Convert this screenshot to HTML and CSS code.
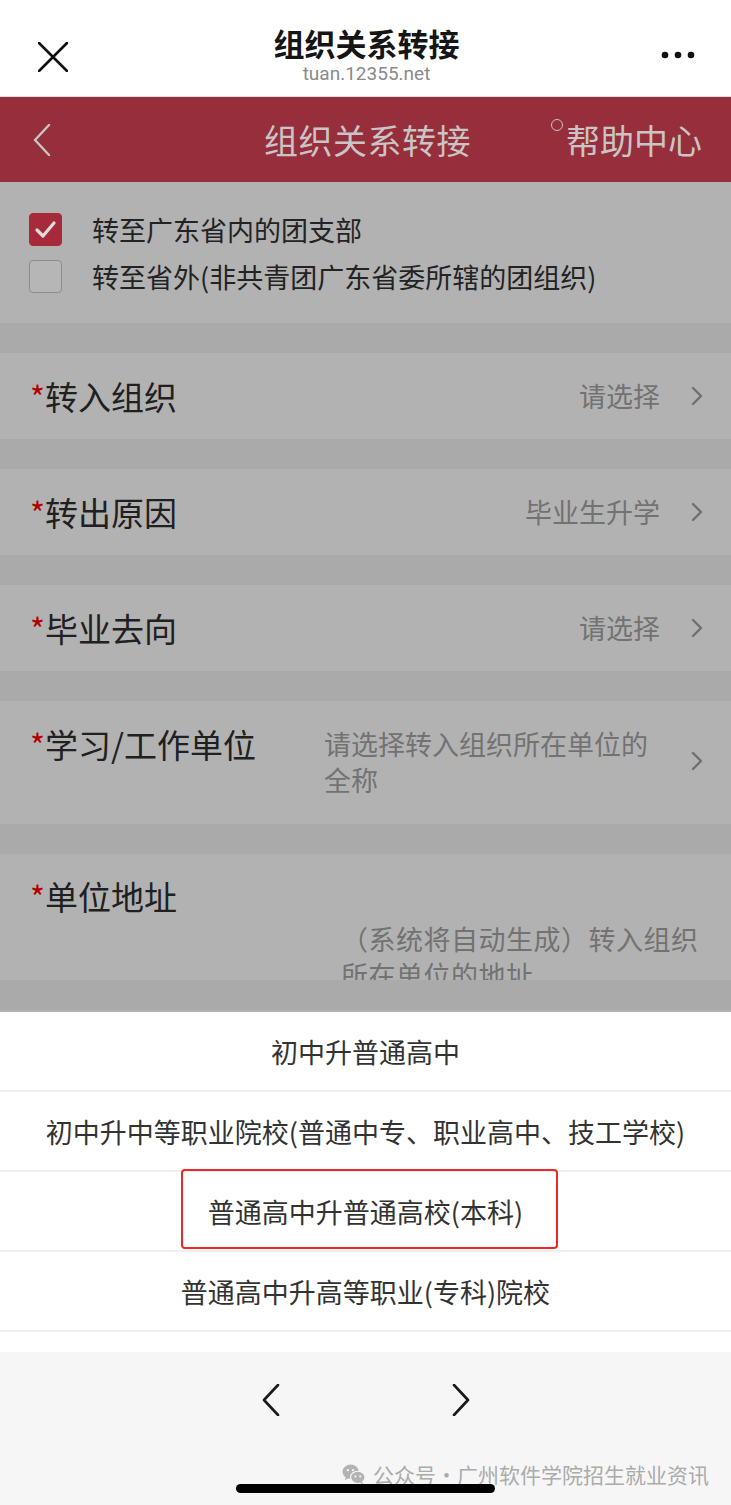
FILE: index.html
```html
<!DOCTYPE html>
<html lang="zh-CN">
<head>
<meta charset="utf-8">
<title>组织关系转接</title>
<link rel="stylesheet" href="styles.css">
</head>
<body>
<div class="screen">
  <header class="topbar">
    <svg class="close" width="30" height="30" viewBox="0 0 30 30"><path d="M1 1 L29 29 M29 1 L1 29" stroke="#111" stroke-width="2.6" stroke-linecap="round" fill="none"/></svg>
    <div class="titles">
      <div class="title">组织关系转接</div>
      <div class="url">tuan.12355.net</div>
    </div>
    <svg class="more" width="34" height="8" viewBox="0 0 34 8"><circle cx="4" cy="4" r="3.3" fill="#111"/><circle cx="17" cy="4" r="3.3" fill="#111"/><circle cx="30" cy="4" r="3.3" fill="#111"/></svg>
  </header>

  <nav class="navbar">
    <svg class="back" width="18" height="32" viewBox="0 0 18 32"><path d="M16 1 L2 16 L16 31" stroke="#c9c4c5" stroke-width="2.4" fill="none" stroke-linecap="round" stroke-linejoin="round"/></svg>
    <div class="nav-title">组织关系转接</div>
    <div class="help"><span class="ring"></span>帮助中心</div>
  </nav>

  <main class="form">
    <section class="choices">
      <div class="choice">
        <span class="box checked"><svg width="31" height="31" viewBox="0 0 31 31"><path d="M7 16 L13 22 L24 9" stroke="#dcdcdc" stroke-width="3.2" fill="none" stroke-linecap="round" stroke-linejoin="round"/></svg></span>
        <span>转至广东省内的团支部</span>
      </div>
      <div class="choice">
        <span class="box"></span>
        <span>转至省外(非共青团广东省委所辖的团组织)</span>
      </div>
    </section>

    <div class="row">
      <div class="label"><span class="star">*</span>转入组织</div>
      <div class="value">请选择</div>
      <svg class="chev" width="12" height="20" viewBox="0 0 12 20"><path d="M2 2 L10 10 L2 18" stroke="#6f6f6f" stroke-width="2.4" fill="none" stroke-linecap="round" stroke-linejoin="round"/></svg>
    </div>

    <div class="row">
      <div class="label"><span class="star">*</span>转出原因</div>
      <div class="value">毕业生升学</div>
      <svg class="chev" width="12" height="20" viewBox="0 0 12 20"><path d="M2 2 L10 10 L2 18" stroke="#6f6f6f" stroke-width="2.4" fill="none" stroke-linecap="round" stroke-linejoin="round"/></svg>
    </div>

    <div class="row">
      <div class="label"><span class="star">*</span>毕业去向</div>
      <div class="value">请选择</div>
      <svg class="chev" width="12" height="20" viewBox="0 0 12 20"><path d="M2 2 L10 10 L2 18" stroke="#6f6f6f" stroke-width="2.4" fill="none" stroke-linecap="round" stroke-linejoin="round"/></svg>
    </div>

    <div class="row tall">
      <div class="label"><span class="star">*</span>学习/工作单位</div>
      <div class="value wrap">请选择转入组织所在单位的全称</div>
      <svg class="chev mid" width="12" height="20" viewBox="0 0 12 20"><path d="M2 2 L10 10 L2 18" stroke="#6f6f6f" stroke-width="2.4" fill="none" stroke-linecap="round" stroke-linejoin="round"/></svg>
    </div>

    <div class="row addr">
      <div class="label"><span class="star">*</span>单位地址</div>
      <div class="value block">（系统将自动生成）转入组织所在单位的地址</div>
    </div>

    <div class="row last">
      <div class="label"><span class="star">*</span>附件上传</div>
    </div>
  </main>

  <div class="sheet">
    <div class="option">初中升普通高中</div>
    <div class="option">初中升中等职业院校(普通中专、职业高中、技工学校)</div>
    <div class="option">普通高中升普通高校(本科)</div>
    <div class="option">普通高中升高等职业(专科)院校</div>
    <div class="spacer"></div>
    <div class="footer">
      <svg width="18" height="32" viewBox="0 0 18 32"><path d="M16 1 L2 16 L16 31" stroke="#1a1a1a" stroke-width="2.6" fill="none" stroke-linecap="round" stroke-linejoin="round"/></svg>
      <svg width="18" height="32" viewBox="0 0 18 32"><path d="M2 1 L16 16 L2 31" stroke="#1a1a1a" stroke-width="2.6" fill="none" stroke-linecap="round" stroke-linejoin="round"/></svg>
    </div>
  </div>

  <div class="highlight"></div>

  <div class="watermark">
    <svg width="24" height="21" viewBox="0 0 25 22">
      <ellipse cx="9" cy="8" rx="8.6" ry="7.4" fill="#b3b3b3"/>
      <path d="M4 13 L3 17 L7.5 14.5 Z" fill="#b3b3b3"/>
      <circle cx="6" cy="6.5" r="1.2" fill="#f6f6f6"/>
      <circle cx="11.5" cy="6.5" r="1.2" fill="#f6f6f6"/>
      <ellipse cx="16.5" cy="14" rx="7.6" ry="6.4" fill="#b3b3b3" stroke="#f6f6f6" stroke-width="1.2"/>
      <path d="M21 18.5 L22.5 21.5 L18.5 19.5 Z" fill="#b3b3b3"/>
      <circle cx="14" cy="13" r="1.1" fill="#f6f6f6"/>
      <circle cx="19" cy="13" r="1.1" fill="#f6f6f6"/>
    </svg>
    <span>公众号<span class="dot">·</span>广州软件学院招生就业资讯</span>
  </div>

  <div class="home-bar"></div>
</div>
</body>
</html>
```

FILE: styles.css
```css
* { box-sizing: border-box; }

body {
  margin: 0;
  font-family: "Noto Sans CJK SC", "Noto Sans", sans-serif;
  background: #aaaaaa;
}

.screen {
  position: relative;
  width: 731px;
  height: 1505px;
  overflow: hidden;
  background: #aaaaaa;
}

/* top white bar */
.topbar {
  height: 97px;
  background: #fff;
  border-bottom: 1px solid #e4dcdd;
  display: grid;
  grid-template-columns: 1fr auto 1fr;
  align-items: start;
  padding: 25px 36px 0 38px;
}
.close { margin-top: 17px; }
.more { justify-self: end; margin-top: 26px; }
.titles { text-align: center; }
.title {
  font-size: 31px;
  line-height: 36px;
  font-weight: 700;
  color: #151515;
}
.url {
  font-family: Roboto, "Liberation Sans", sans-serif;
  font-size: 19px;
  line-height: 22px;
  margin-top: 2px;
  color: #8a8a8a;
}

/* red nav */
.navbar {
  height: 85px;
  background: #962e3b;
  display: grid;
  grid-template-columns: 1fr auto 1fr;
  align-items: center;
  padding: 0 29px 0 33px;
  color: #c9c4c5;
}
.nav-title {
  font-size: 34px;
  line-height: 42px;
  letter-spacing: 0.5px;
}
.help {
  justify-self: end;
  display: flex;
  align-items: flex-start;
  font-size: 34px;
  line-height: 42px;
}
.ring {
  width: 12px;
  height: 12px;
  border: 1.6px solid #c9c4c5;
  border-radius: 50%;
  margin-right: 3px;
}

/* form */
.form {
  display: flex;
  flex-direction: column;
  gap: 30px;
}
.choices {
  background: #b2b2b2;
  padding: 24px 0 23px 29px;
}
.choice {
  display: flex;
  align-items: center;
  height: 47px;
  font-size: 27px;
  color: #232323;
}
.box {
  width: 33px;
  height: 33px;
  border: 1px solid #8d8d8d;
  border-radius: 4px;
  background: #b6b6b6;
  margin-right: 30px;
  flex: none;
  display: flex;
}
.box.checked {
  background: #a72a3b;
  border-color: #a72a3b;
}

.row {
  background: #b2b2b2;
  display: flex;
  align-items: center;
  min-height: 86px;
  padding: 0 28px 0 30px;
}
.label {
  font-size: 33px;
  line-height: 42px;
  color: #202020;
  flex: none;
  white-space: nowrap;
}
.star { color: #b30000; font-size: 32px; }
.value {
  margin-left: auto;
  font-size: 27px;
  line-height: 36px;
  color: #727272;
}
.chev {
  flex: none;
  margin-left: 31px;
}

.row.tall {
  align-items: flex-start;
  padding-top: 22px;
  padding-bottom: 26px;
}
.value.wrap {
  margin-left: 68px;
  margin-top: 3px;
  width: 330px;
}
.chev.mid {
  align-self: center;
  margin-left: auto;
}

.row.addr {
  height: 126px;
  overflow: hidden;
  flex-direction: column;
  align-items: stretch;
  padding-top: 21px;
}
.value.block {
  align-self: flex-end;
  width: 362px;
  margin-top: 4px;
  margin-right: 0;
  letter-spacing: 0.5px;
}

.row.last {
  align-items: flex-start;
  padding-top: 0;
  min-height: 120px;
}
.row.last .label { margin-top: -3px; }

/* bottom sheet */
.sheet {
  position: absolute;
  left: 0;
  right: 0;
  top: 1012px;
  bottom: 0;
  background: #fff;
  display: flex;
  flex-direction: column;
}
.option {
  height: 80px;
  border-bottom: 2px solid #efefef;
  display: flex;
  align-items: center;
  justify-content: center;
  font-size: 27px;
  color: #333;
  white-space: nowrap;
}
.spacer { height: 20px; }
.footer {
  flex: 1;
  background: #f6f6f6;
  display: flex;
  justify-content: center;
  align-items: flex-start;
  gap: 172px;
  padding-top: 32px;
}

.highlight {
  position: absolute;
  left: 181px;
  top: 1169px;
  width: 377px;
  height: 80px;
  border: 2.5px solid #ec2629;
  border-radius: 4px;
}

.watermark {
  position: absolute;
  left: 342px;
  top: 1459px;
  display: flex;
  align-items: center;
  gap: 7px;
  font-size: 21px;
  line-height: 30px;
  color: #ababab;
  white-space: nowrap;
}
.dot { margin: 0; }

.home-bar {
  position: absolute;
  left: 236px;
  top: 1484px;
  width: 259px;
  height: 9px;
  border-radius: 5px;
  background: #000;
}
```
